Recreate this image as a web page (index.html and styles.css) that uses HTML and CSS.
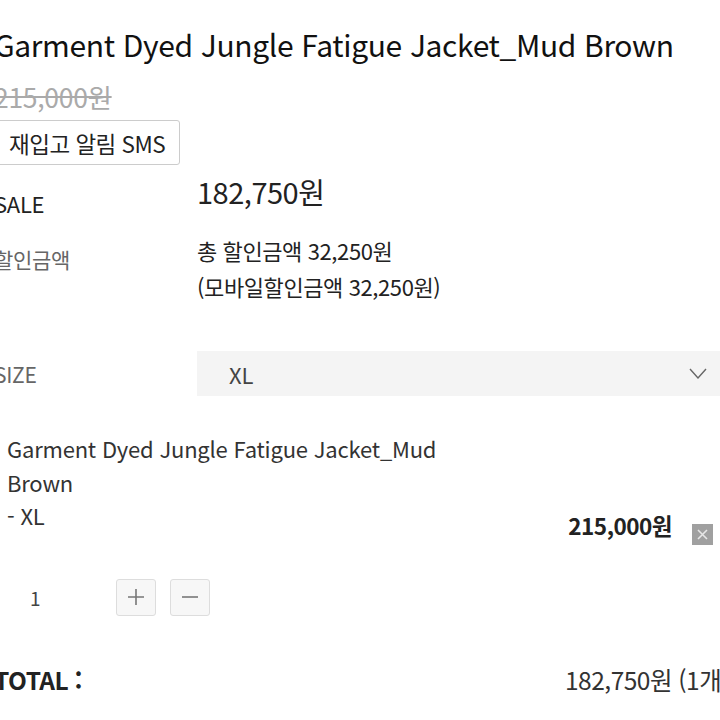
FILE: index.html
```html
<!DOCTYPE html>
<html lang="ko">
<head>
<meta charset="utf-8">
<link rel="stylesheet" href="styles.css">
</head>
<body>
<div class="page">
  <h1 class="title">Garment Dyed Jungle Fatigue Jacket_Mud Brown</h1>
  <div class="old-price">215,000원</div>
  <button class="sms-btn">재입고 알림 SMS</button>

  <div class="row row-sale">
    <div class="label dark">SALE</div>
    <div class="value sale-price">182,750원</div>
  </div>

  <div class="row row-discount">
    <div class="label">할인금액</div>
    <div class="value discount">
      <div>총 할인금액 32,250원</div>
      <div>(모바일할인금액 32,250원)</div>
    </div>
  </div>

  <div class="row row-size">
    <div class="label">SIZE</div>
    <div class="select">
      <span>XL</span>
      <svg class="chev" width="18" height="11" viewBox="0 0 18 11"><path d="M1 1 L9 10 L17 1" fill="none" stroke="#666" stroke-width="1.4"/></svg>
    </div>
  </div>

  <div class="item">
    <div class="item-name">Garment Dyed Jungle Fatigue Jacket_Mud<br>Brown<br>- XL</div>
    <div class="item-price">
      <span class="price">215,000원</span>
      <span class="del">
        <svg width="13" height="13" viewBox="0 0 13 13"><path d="M2 2 L11 11 M11 2 L2 11" stroke="#e6e6e6" stroke-width="1.6"/></svg>
      </span>
    </div>
  </div>

  <div class="qty">
    <span class="qty-num">1</span>
    <span class="qbtn">
      <svg width="20" height="20" viewBox="0 0 20 20"><path d="M10 2 V18 M2 10 H18" stroke="#777" stroke-width="1.6"/></svg>
    </span>
    <span class="qbtn">
      <svg width="20" height="20" viewBox="0 0 20 20"><path d="M2 10 H18" stroke="#777" stroke-width="1.6"/></svg>
    </span>
  </div>

  <div class="total">
    <span class="total-label">TOTAL :</span>
    <span class="total-value">182,750원 (1개)</span>
  </div>
</div>
</body>
</html>
```

FILE: styles.css
```css
html, body {
  margin: 0;
  padding: 0;
  background: #fff;
  overflow: hidden;
}
body {
  width: 720px;
  height: 720px;
  font-family: "Noto Sans CJK KR", "Noto Sans", sans-serif;
  color: #222;
}
.page {
  margin-left: -6px;
  width: 740px;
  padding-top: 24px;
}
.title {
  margin: 0;
  font-size: 30px;
  font-weight: 400;
  line-height: 40px;
  color: #111;
  letter-spacing: -0.36px;
  white-space: nowrap;
}
.old-price {
  margin-top: 18px;
  font-size: 26.5px;
  line-height: 30px;
  color: #aaa;
  text-decoration: line-through;
  letter-spacing: -0.3px;
}
.sms-btn {
  display: block;
  margin-top: 8px;
  height: 45px;
  padding: 0 14px 0 14px;
  border: 1px solid #ccc;
  border-radius: 3px;
  background: #fff;
  font-family: inherit;
  font-size: 22.5px;
  color: #222;
  letter-spacing: -0.5px;
}
.row {
  display: flex;
}
.label {
  width: 203px;
  flex: none;
  font-size: 21px;
  line-height: 30px;
  color: #666;
  letter-spacing: -0.3px;
}
.label.dark { color: #222; font-size: 22px; }
.row-sale {
  margin-top: 8px;
  align-items: flex-start;
}
.row-sale .label { padding-top: 15px; }
.sale-price {
  font-size: 29px;
  line-height: 36px;
  color: #222;
  letter-spacing: -0.5px;
}
.row-discount {
  margin-top: 14px;
}
.row-discount .label { padding-top: 12px; }
.discount {
  font-size: 22px;
  line-height: 36px;
  letter-spacing: -0.4px;
  color: #222;
}
.row-size {
  margin-top: 47px;
  align-items: center;
}
.select {
  flex: 1;
  height: 45px;
  background: #f4f4f4;
  display: flex;
  align-items: center;
  justify-content: space-between;
  padding: 0 27px 0 32px;
  font-size: 22px;
  color: #444;
}
.item {
  margin-top: 36px;
  display: flex;
  padding-left: 13px;
  width: 719px;
  box-sizing: border-box;
}
.item-name {
  flex: 1;
  font-size: 22px;
  line-height: 33.5px;
  padding-bottom: 12px;
  color: #333;
  letter-spacing: -0.2px;
}
.item-price {
  display: flex;
  align-items: flex-end;
  gap: 20px;
}
.price {
  font-size: 22.5px;
  font-weight: 700;
  color: #222;
  line-height: 26px;
  margin-bottom: 7px;
  letter-spacing: -0.5px;
}
.del {
  width: 21px;
  height: 21px;
  background: #a0a0a0;
  display: flex;
  align-items: center;
  justify-content: center;
}
.qty {
  margin-top: 34px;
  display: flex;
  align-items: center;
}
.qty-num {
  width: 122px;
  padding-left: 36px;
  box-sizing: border-box;
  font-size: 19px;
  color: #444;
}
.qbtn {
  width: 40px;
  height: 37px;
  box-sizing: border-box;
  border: 1px solid #ddd;
  border-radius: 3px;
  background: #f7f7f7;
  display: flex;
  align-items: center;
  justify-content: center;
  margin-right: 14px;
}
.total {
  margin-top: 49px;
  display: flex;
  align-items: center;
  font-size: 24.5px;
  line-height: 30px;
}
.total-label {
  width: 571px;
  flex: none;
  font-weight: 700;
  color: #222;
  letter-spacing: -0.5px;
}
.total-value {
  color: #333;
  white-space: nowrap;
  letter-spacing: -0.5px;
}
```
